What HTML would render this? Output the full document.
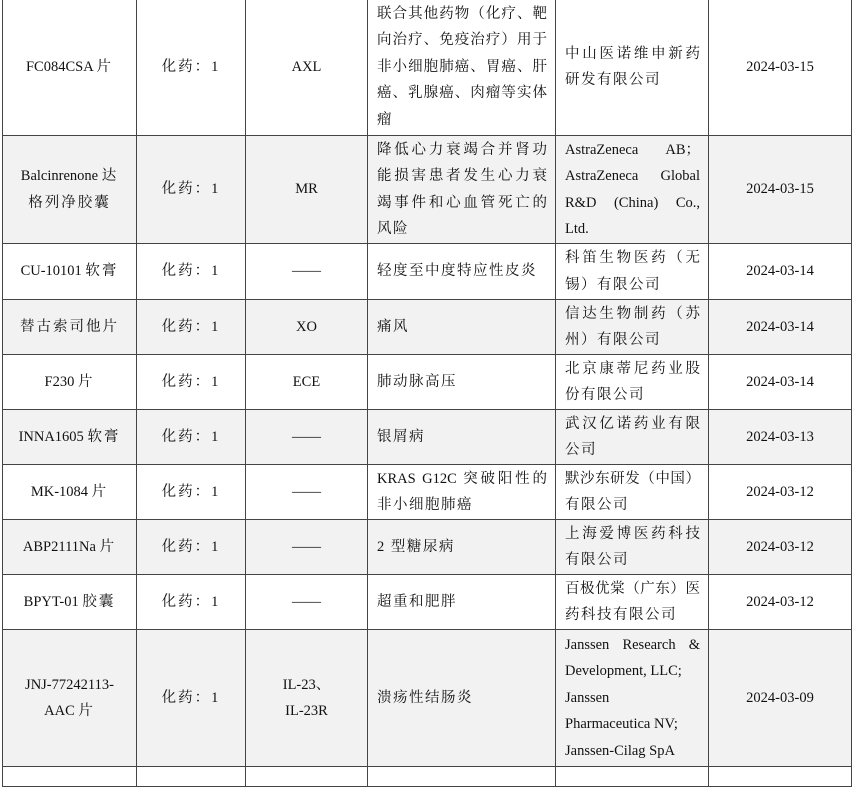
<!DOCTYPE html>
<html><head><meta charset="utf-8"><style>
body{margin:0;background:#fff;width:853px;height:768px;overflow:hidden;position:relative}
table{position:absolute;left:2px;top:-2px;border-collapse:collapse;table-layout:fixed;font-family:"Liberation Serif","Noto Serif CJK SC",serif;font-size:14.5px;color:#111}
td{border:1px solid #444;text-align:center;vertical-align:middle;padding:0 6px;line-height:26.5px;letter-spacing:0;overflow:hidden}
td.l{text-align:left;padding:0 8px 0 9px;letter-spacing:1.5px}
td.e{text-align:left;padding:0 8px 0 9px;letter-spacing:0}
tr.g td{background:#f2f2f2}
.j{display:block;text-align:justify;text-align-last:justify;letter-spacing:0}
.c{letter-spacing:2px}
</style></head><body>
<table>
<colgroup><col style="width:134px"><col style="width:109px"><col style="width:122px"><col style="width:188px"><col style="width:153px"><col style="width:143px"></colgroup>
<tr style="height:137px"><td>FC084CSA <span class="c">片</span></td><td class="c">化药：1</td><td>AXL</td><td class="l"><span class="j">联合其他药物（化疗、靶</span><span class="j">向治疗、免疫治疗）用于</span><span class="j">非小细胞肺癌、胃癌、肝</span><span class="j">癌、乳腺癌、肉瘤等实体</span>瘤</td><td class="l"><span class="j">中山医诺维申新药</span>研发有限公司</td><td>2024-03-15</td></tr>
<tr class="g" style="height:108px"><td>Balcinrenone <span class="c">达</span><br><span class="c">格列净胶囊</span></td><td class="c">化药：1</td><td>MR</td><td class="l"><span class="j">降低心力衰竭合并肾功</span><span class="j">能损害患者发生心力衰</span><span class="j">竭事件和心血管死亡的</span>风险</td><td class="e"><span class="j">AstraZeneca AB；</span><span class="j">AstraZeneca Global</span><span class="j">R&amp;D (China) Co.,</span>Ltd.</td><td>2024-03-15</td></tr>
<tr style="height:56px"><td>CU-10101 <span class="c">软膏</span></td><td class="c">化药：1</td><td>——</td><td class="l">轻度至中度特应性皮炎</td><td class="l"><span class="j">科笛生物医药（无</span>锡）有限公司</td><td>2024-03-14</td></tr>
<tr class="g" style="height:55px"><td class="c">替古索司他片</td><td class="c">化药：1</td><td>XO</td><td class="l">痛风</td><td class="l"><span class="j">信达生物制药（苏</span>州）有限公司</td><td>2024-03-14</td></tr>
<tr style="height:55px"><td>F230 <span class="c">片</span></td><td class="c">化药：1</td><td>ECE</td><td class="l">肺动脉高压</td><td class="l"><span class="j">北京康蒂尼药业股</span>份有限公司</td><td>2024-03-14</td></tr>
<tr class="g" style="height:55px"><td>INNA1605 <span class="c">软膏</span></td><td class="c">化药：1</td><td>——</td><td class="l">银屑病</td><td class="l"><span class="j">武汉亿诺药业有限</span>公司</td><td>2024-03-13</td></tr>
<tr style="height:55px"><td>MK-1084 <span class="c">片</span></td><td class="c">化药：1</td><td>——</td><td class="l"><span class="j">KRAS G12C 突破阳性的</span>非小细胞肺癌</td><td class="l"><span class="j">默沙东研发（中国）</span>有限公司</td><td>2024-03-12</td></tr>
<tr class="g" style="height:55px"><td>ABP2111Na <span class="c">片</span></td><td class="c">化药：1</td><td>——</td><td class="l">2 型糖尿病</td><td class="l"><span class="j">上海爱博医药科技</span>有限公司</td><td>2024-03-12</td></tr>
<tr style="height:55px"><td>BPYT-01 <span class="c">胶囊</span></td><td class="c">化药：1</td><td>——</td><td class="l">超重和肥胖</td><td class="l"><span class="j">百极优棠（广东）医</span>药科技有限公司</td><td>2024-03-12</td></tr>
<tr class="g" style="height:137px"><td>JNJ-77242113-<br>AAC <span class="c">片</span></td><td class="c">化药：1</td><td>IL-23、<br>IL-23R</td><td class="l">溃疡性结肠炎</td><td class="e"><span class="j">Janssen Research &amp;</span>Development, LLC;<br>Janssen<br>Pharmaceutica NV;<br>Janssen-Cilag SpA</td><td>2024-03-09</td></tr>
<tr style="height:20px"><td></td><td></td><td></td><td></td><td></td><td></td></tr>
</table>
</body></html>
